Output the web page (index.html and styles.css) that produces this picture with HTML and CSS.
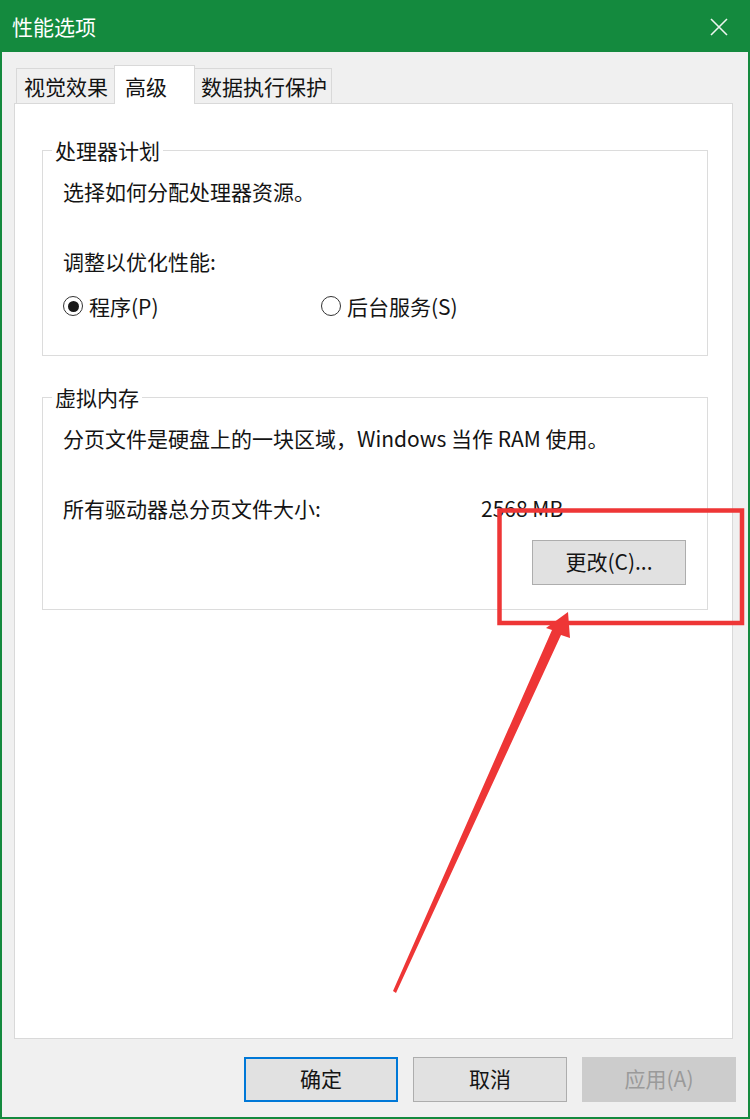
FILE: index.html
```html
<!DOCTYPE html>
<html lang="zh-CN">
<head>
<meta charset="utf-8">
<title>性能选项</title>
<link rel="stylesheet" href="styles.css">
</head>
<body>
<div class="window">
  <div class="titlebar">
    <span class="title">性能选项</span>
    <svg class="close" width="20" height="20" viewBox="0 0 20 20"><path d="M2 2 L18 18 M18 2 L2 18" stroke="#ffffff" stroke-width="1.6" fill="none"/></svg>
  </div>
  <div class="content">
    <div class="tabs">
      <div class="tab t1">视觉效果</div>
      <div class="tab t2 active">高级</div>
      <div class="tab t3">数据执行保护</div>
    </div>
    <div class="panel">
      <fieldset class="group g1">
        <legend>处理器计划</legend>
        <div class="body">
          <p class="row">选择如何分配处理器资源。</p>
          <p class="row r2">调整以优化性能:</p>
          <div class="row radios">
            <label class="radio first"><span class="dot checked"></span>程序(P)</label>
            <label class="radio"><span class="dot"></span>后台服务(S)</label>
          </div>
        </div>
      </fieldset>
      <fieldset class="group g2">
        <legend>虚拟内存</legend>
        <div class="body body2">
          <p class="row">分页文件是硬盘上的一块区域，Windows 当作 RAM 使用。</p>
          <div class="row size-row"><span class="size-label">所有驱动器总分页文件大小:</span><span>2568 MB</span></div>
          <div class="btn-row"><button class="btn change">更改(C)...</button></div>
        </div>
      </fieldset>
    </div>
    <div class="footer">
      <button class="btn default">确定</button>
      <button class="btn">取消</button>
      <button class="btn disabled">应用(A)</button>
    </div>
  </div>
  <svg class="annot" width="750" height="1119" viewBox="0 0 750 1119">
    <rect x="499.5" y="510.5" width="242.5" height="112.5" fill="none" stroke="#ee3636" stroke-width="4.5"/>
    <polygon points="568,612 570,638 561,635 396,993 393,991 552,630 546,628" fill="#ee3636"/>
  </svg>
</div>
</body>
</html>
```
FILE: styles.css
```css
* { box-sizing: border-box; }
html, body { margin: 0; padding: 0; background: #f0f0f0; }
body {
  font-family: "Noto Sans CJK SC", "Noto Sans", sans-serif;
  font-size: 21px;
  color: #141414;
}
.window {
  position: relative;
  width: 750px;
  height: 1119px;
  background: #f0f0f0;
  border: 2px solid #148a3e;
  border-top: none;
  display: flex;
  flex-direction: column;
}
.titlebar {
  height: 52px;
  flex: none;
  background: #148a3e;
  display: flex;
  align-items: center;
  justify-content: space-between;
  padding: 0 19px 0 10px;
}
.title {
  color: #ffffff;
  font-size: 21px;
  line-height: 28px;
}
.close { opacity: 0.92; margin-top: 2px; }
.content {
  flex: 1;
  display: flex;
  flex-direction: column;
  padding: 0 12px;
}
.tabs {
  display: flex;
  align-items: flex-end;
  height: 39px;
  margin-top: 13px;
  margin-bottom: -1px;
  padding-left: 2px;
  position: relative;
  z-index: 1;
}
.tab {
  height: 35px;
  margin-bottom: 1px;
  border: 1px solid #d9d9d9;
  border-bottom: none;
  background: #f0f0f0;
  line-height: 30px;
  padding-top: 2px;
  padding-left: 7px;
  white-space: nowrap;
}
.t1 { width: 99px; }
.t2 {
  width: 81px;
  margin-left: -1px;
  margin-right: -2px;
  padding-left: 10px;
}
.t3 { width: 139px; }
.tab.active {
  height: 39px;
  margin-bottom: 0;
  background: #ffffff;
  padding-top: 5px;
  position: relative;
  z-index: 2;
}
.panel {
  flex: 1;
  background: #ffffff;
  border: 1px solid #d9d9d9;
  margin-right: 3px;
  padding: 32px 24px 0 27px;
}
.group {
  margin: 0;
  padding: 0;
  border: 1px solid #dcdcdc;
  min-width: 0;
}
.group legend {
  line-height: 28px;
  padding: 0 3px;
  margin-left: 9px;
}
.g2 { margin-top: 27px; }
.body { padding: 13px 20px 35px 20px; }
.body2 { padding-bottom: 24px; }
.row { margin: 0; line-height: 28px; height: 28px; white-space: nowrap; }
.r2 { margin-top: 42px; }
.radios { margin-top: 17px; display: flex; align-items: center; }
.radio { display: flex; align-items: center; gap: 6px; }
.radio.first { width: 258px; }
.dot {
  width: 20px;
  height: 20px;
  border: 1.5px solid #333333;
  border-radius: 50%;
  display: flex;
  align-items: center;
  justify-content: center;
  background: #ffffff;
}
.dot.checked::after {
  content: "";
  width: 11px;
  height: 11px;
  border-radius: 50%;
  background: #1a1a1a;
}
.size-row { margin-top: 42px; display: flex; }
.size-label { width: 418px; }
.btn-row { display: flex; justify-content: flex-end; margin-top: 18px; padding-right: 1px; }
.btn {
  font-family: "Noto Sans CJK SC", "Noto Sans", sans-serif;
  font-size: 21px;
  color: #141414;
  background: #e1e1e1;
  border: 1px solid #adadad;
  height: 45px;
  width: 154px;
  padding: 0 0 3px 0;
  margin: 0;
  line-height: 28px;
}
.change { width: 154px; }
.footer {
  flex: none;
  display: flex;
  justify-content: flex-end;
  gap: 15px;
  padding: 18px 0 15px 0;
}
.btn.default { border: 2px solid #0078d7; }
.btn.disabled { background: #cccccc; border-color: #cccccc; color: #9a9a9a; }
.annot { position: absolute; left: -2px; top: 0; pointer-events: none; }
```
